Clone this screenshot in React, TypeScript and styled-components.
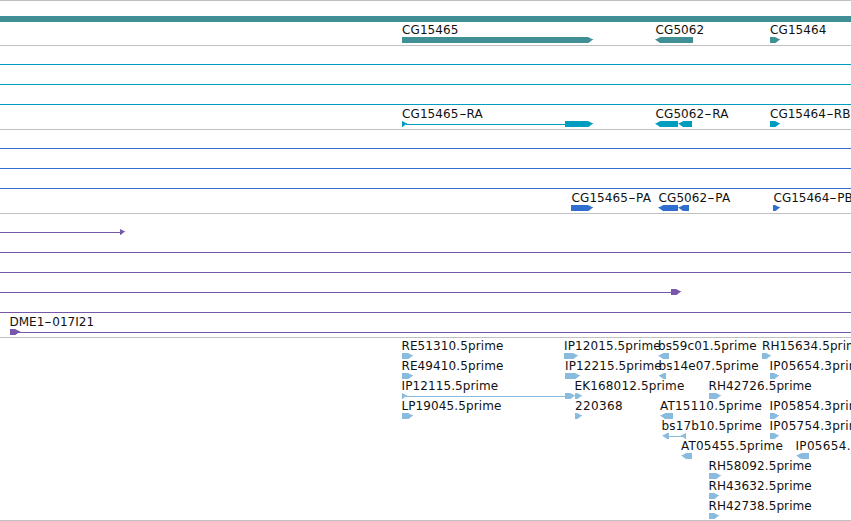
import React from "react";
import styled, { createGlobalStyle } from "styled-components";

const GlobalStyle = createGlobalStyle`
  body { margin: 0; background: #fff; }
`;

const Browser = styled.main`
  display: flex;
  flex-direction: column;
  width: 851px;
  height: 521px;
  overflow: hidden;
  box-sizing: border-box;
  border-bottom: 1px solid #c0c0c0;
  background: #fff;
`;

const Track = styled.section<{ $lead?: number }>`
  flex: none;
  border-top: 1px solid #c0c0c0;
  padding: ${(p) => p.$lead ?? 2}px 0 1px;
`;

const Lane = styled.div`
  position: relative;
  height: 20px;
`;

const LaneShapes = styled.svg`
  display: block;
  width: 851px;
  height: 20px;
  overflow: visible;
`;

const Label = styled.span<{ $x: number; $spacing: number }>`
  position: absolute;
  z-index: 1;
  left: ${(p) => p.$x}px;
  top: -1px;
  font: 12px/14px "DejaVu Sans", sans-serif;
  letter-spacing: ${(p) => p.$spacing}px;
  color: #111;
  white-space: nowrap;
`;

const Dash = styled.span`
  display: inline-block;
  width: 8px;
  text-align: center;
  transform: scaleX(1.7);
`;

type Span = [start: number, end: number, dir: "r" | "l" | "line" | "band"];
type LaneData = { labels?: [x: number, text: string, spacing?: number][]; spans: Span[] };
type TrackData = { color: string; lead?: number; lanes: LaneData[] };

const full: LaneData = { spans: [[0, 851, "line"]] };

const tracks: TrackData[] = [
  {
    color: "#3f8f94",
    lead: 3,
    lanes: [
      { spans: [[0, 851, "band"]] },
      {
        labels: [[402, "CG15465"], [655.5, "CG5062"], [770, "CG15464"]],
        spans: [[402, 593.5, "r"], [655, 693, "l"], [770, 780.5, "r"]],
      },
    ],
  },
  {
    color: "#009dbf",
    lanes: [
      full,
      full,
      full,
      {
        labels: [[402, "CG15465-RA"], [655.5, "CG5062-RA"], [770, "CG15464-RB", 0]],
        spans: [[402, 407.5, "r"], [406, 565, "line"], [565, 593.5, "r"], [655, 678, "l"], [678, 692, "l"], [770, 780.5, "r"]],
      },
    ],
  },
  {
    color: "#306fcf",
    lanes: [
      full,
      full,
      full,
      {
        labels: [[571.5, "CG15465-PA"], [658.5, "CG5062-PA"], [773.5, "CG15464-PB", 0]],
        spans: [[571, 593.5, "r"], [658, 678, "l"], [678, 689, "l"], [773, 780.5, "r"]],
      },
    ],
  },
  {
    color: "#7757a8",
    lanes: [
      { spans: [[0, 121, "line"], [120, 125.5, "r"]] },
      full,
      full,
      { spans: [[0, 672, "line"], [671, 681.5, "r"]] },
      full,
      { labels: [[9.5, "DME1-017I21", 0]], spans: [[10, 20.5, "r"], [18, 851, "line"]] },
    ],
  },
  {
    color: "#88bbdd",
    lanes: [
      {
        labels: [[401.5, "RE51310.5prime"], [564, "IP12015.5prime"], [658, "bs59c01.5prime"], [762, "RH15634.5prime"]],
        spans: [[402, 413.5, "r"], [564, 578.5, "r"], [658, 669, "l"], [762, 771.5, "r"]],
      },
      {
        labels: [[401.5, "RE49410.5prime"], [565, "IP12215.5prime"], [658.5, "bs14e07.5prime", 0.15], [769.5, "IP05654.3prime", 0.25]],
        spans: [[402, 413.5, "r"], [565, 580.5, "r"], [658.5, 666, "l"], [770, 779.5, "r"]],
      },
      {
        labels: [[401.5, "IP12115.5prime"], [574.5, "EK168012.5prime", 0.15], [708.5, "RH42726.5prime"]],
        spans: [[402, 407.5, "r"], [406, 566, "line"], [565, 575.5, "r"], [575, 582.5, "r"], [709, 721.5, "r"]],
      },
      {
        labels: [[401.5, "LP19045.5prime"], [575, "220368", 0.35], [660, "AT15110.5prime", 0.2], [769.5, "IP05854.3prime", 0.25]],
        spans: [[402, 413.5, "r"], [575, 582.5, "r"], [660, 673, "l"], [770, 779.5, "r"]],
      },
      {
        labels: [[661.5, "bs17b10.5prime", 0.15], [769.5, "IP05754.3prime", 0.25]],
        spans: [[662, 669, "l"], [668, 682, "line"], [680.5, 686, "l"], [770, 779.5, "r"]],
      },
      {
        labels: [[681, "AT05455.5prime", 0.2], [795.5, "IP05654.3prime", 0.32]],
        spans: [[681, 692, "l"], [796, 809, "l"]],
      },
      { labels: [[708.5, "RH58092.5prime"]], spans: [[709, 721.5, "r"]] },
      { labels: [[708.5, "RH43632.5prime"]], spans: [[709, 719.5, "r"]] },
      { labels: [[708.5, "RH42738.5prime"]], spans: [[709, 719.5, "r"]] },
    ],
  },
];

function Feature({ span: [a, b, dir], color }: { span: Span; color: string }) {
  if (dir === "band") return <rect x={a} y={12} width={b - a} height={6} fill={color} />;
  if (dir === "line") return <rect x={a} y={16} width={b - a} height={1} fill={color} />;
  const points =
    dir === "r"
      ? `${a},13 ${b - 5.5},13 ${b - 1.5},15 ${b},15.5 ${b - 1.5},16.3 ${b - 5},19 ${a},19`
      : `${b},13 ${a + 5.5},13 ${a + 1.5},15 ${a},15.5 ${a + 1.5},16.5 ${a + 5},19 ${b},19`;
  return <polygon points={points} fill={color} />;
}

function Name({ text }: { text: string }) {
  const [head, tail] = text.split("-");
  return tail ? <>{head}<Dash>-</Dash>{tail}</> : <>{head}</>;
}

export default function App() {
  return (
    <>
      <GlobalStyle />
      <Browser>
        {tracks.map((track, t) => (
          <Track key={t} $lead={track.lead}>
            {track.lanes.map((lane, l) => (
              <Lane key={l}>
                <LaneShapes viewBox="0 0 851 20">
                  {lane.spans.map((span, s) => (
                    <Feature key={s} span={span} color={track.color} />
                  ))}
                </LaneShapes>
                {lane.labels?.map(([x, text, spacing = 0.1]) => (
                  <Label key={x} $x={x} $spacing={spacing}><Name text={text} /></Label>
                ))}
              </Lane>
            ))}
          </Track>
        ))}
      </Browser>
    </>
  );
}
